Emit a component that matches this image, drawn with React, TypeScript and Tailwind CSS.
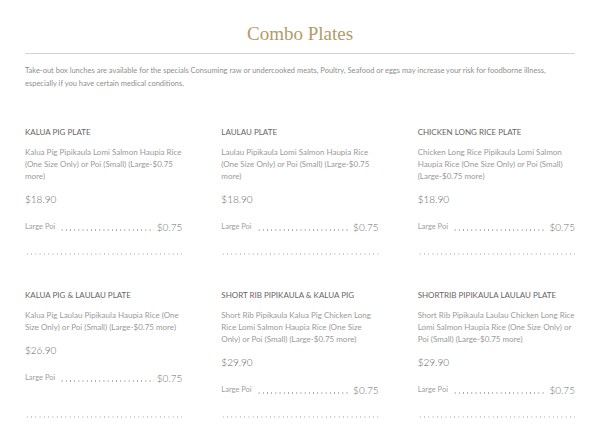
import React from "react";

type Plate = {
  name: string;
  description: string;
  price: string;
};

const plates: Plate[] = [
  {
    name: "KALUA PIG PLATE",
    description:
      "Kalua Pig Pipikaula Lomi Salmon Haupia Rice (One Size Only) or Poi (Small) (Large-$0.75 more)",
    price: "$18.90",
  },
  {
    name: "LAULAU PLATE",
    description:
      "Laulau Pipikaula Lomi Salmon Haupia Rice (One Size Only) or Poi (Small) (Large-$0.75 more)",
    price: "$18.90",
  },
  {
    name: "CHICKEN LONG RICE PLATE",
    description:
      "Chicken Long Rice Pipikaula Lomi Salmon Haupia Rice (One Size Only) or Poi (Small) (Large-$0.75 more)",
    price: "$18.90",
  },
  {
    name: "KALUA PIG & LAULAU PLATE",
    description:
      "Kalua Pig Laulau Pipikaula Haupia Rice (One Size Only) or Poi (Small) (Large-$0.75 more)",
    price: "$26.90",
  },
  {
    name: "SHORT RIB PIPIKAULA & KALUA PIG",
    description:
      "Short Rib Pipikaula Kalua Pig Chicken Long Rice Lomi Salmon Haupia Rice (One Size Only) or Poi (Small) (Large-$0.75 more)",
    price: "$29.90",
  },
  {
    name: "SHORTRIB PIPIKAULA LAULAU PLATE",
    description:
      "Short Rib Pipikaula Laulau Chicken Long Rice Lomi Salmon Haupia Rice (One Size Only) or Poi (Small) (Large-$0.75 more)",
    price: "$29.90",
  },
];

function PlateCard({ plate }: { plate: Plate }) {
  return (
    <div className="flex flex-col">
      <h3 className="text-[8px] font-normal leading-[12px] text-[#666]">{plate.name}</h3>
      <p className="mt-[8px] text-[8px] leading-[12px] text-[#9a9a9a]">
        {plate.description}
      </p>
      <span className="mt-[10px] text-[10px] font-light leading-[14px] text-[#666]">
        {plate.price}
      </span>
      {/* add-on row with dotted leader */}
      <div className="mt-[14px] flex items-end h-[14px]">
        <span className="text-[7.5px] leading-[14px] text-[#a0a0a0]">Large Poi</span>
        <span className="flex-1 ml-[5px] mr-[3px] mb-[3px] h-[2px] bg-[radial-gradient(circle,#a5a5a5_0.6px,transparent_0.9px)] bg-[length:4.2px_2px]"></span>
        <span className="text-[10px] font-light leading-[14px] text-[#707070]">$0.75</span>
      </div>
      <div className="flex-1 min-h-[19px]"></div>
      <div className="h-[2px] bg-[radial-gradient(circle,#c8c8c8_0.6px,transparent_0.9px)] bg-[length:4.3px_2px]"></div>
    </div>
  );
}

export default function App() {
  return (
    <div className="w-[600px] h-[447px] bg-white px-[25px] overflow-hidden font-['Lato','Liberation_Sans',sans-serif]">
      <h1 className="pt-[22px] text-center text-[19px] font-normal leading-[24px] text-[#b59a68] font-['Liberation_Serif','Times_New_Roman',serif]">
        Combo Plates
      </h1>
      <div className="mt-[7px] h-px bg-[#d4d4d4]"></div>
      <p className="mt-[10px] text-[7.5px] leading-[13px] text-[#8f8f8f]">
        Take-out box lunches are available for the specials Consuming raw or undercooked
        meats, Poultry, Seafood or eggs may increase your risk for foodborne illness,
        especially if you have certain medical conditions.
      </p>

      <div className="mt-[36px] grid grid-cols-3 gap-x-[39px] gap-y-[34px]">
        {plates.map((plate) => (
          <PlateCard key={plate.name} plate={plate} />
        ))}
      </div>
    </div>
  );
}
